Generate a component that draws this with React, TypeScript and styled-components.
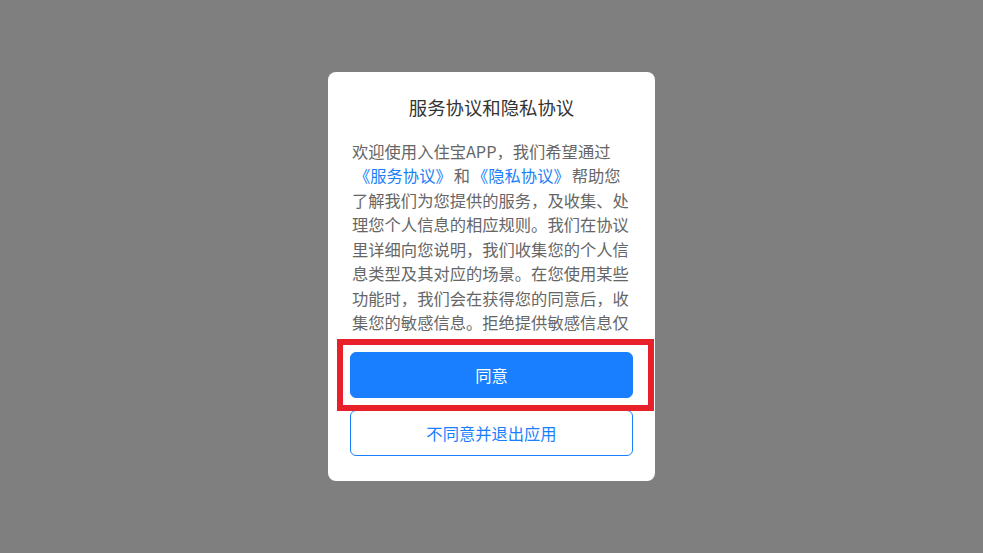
import styled, { createGlobalStyle } from 'styled-components';

const GlobalStyle = createGlobalStyle`
  html, body {
    margin: 0;
    padding: 0;
  }
  body {
    font-family: "Noto Sans CJK SC", "Noto Sans", sans-serif;
  }
`;

function App() {
  return (
    <>
      <GlobalStyle />
      <Mask>
        <Dialog>
          <Title>服务协议和隐私协议</Title>
          <Content>
            欢迎使用入住宝APP，我们希望通过
            <Link>《服务协议》</Link>和<Link>《隐私协议》</Link>
            帮助您了解我们为您提供的服务，及收集、处理您个人信息的相应规则。我们在协议里详细向您说明，我们收集您的个人信息类型及其对应的场景。在您使用某些功能时，我们会在获得您的同意后，收集您的敏感信息。拒绝提供敏感信息仅会使您无法使用相关特定功能，但不影响您使用入住宝的其他功能。
          </Content>
          <Actions>
            <Highlighted>
              <Button primary>同意</Button>
              <Marker />
            </Highlighted>
            <Button>不同意并退出应用</Button>
          </Actions>
        </Dialog>
      </Mask>
    </>
  );
}

export default App;

const Mask = styled.div`
  width: 100%;
  height: 553px;
  background: #7f7f7f;
  display: flex;
  align-items: center;
  justify-content: center;
`;

const Dialog = styled.div`
  width: 327px;
  box-sizing: border-box;
  padding: 22px 22px 25px;
  background: #fff;
  border-radius: 8px;
  display: flex;
  flex-direction: column;
`;

const Title = styled.div`
  height: 26px;
  line-height: 26px;
  font-size: 18.4px;
  color: #333;
  text-align: center;
`;

const Content = styled.div`
  margin: 19px 2px 0;
  height: 196px;
  overflow: hidden;
  font-size: 16.3px;
  line-height: 24.45px;
  color: #666;
  line-break: auto;
  word-break: normal;
`;

const Link = styled.span`
  color: #1a7ff7;
  margin: 0 2px;
`;

const Actions = styled.div`
  margin-top: 17px;
  display: flex;
  flex-direction: column;
  gap: 12px;
`;

const Highlighted = styled.div`
  position: relative;
`;

const Marker = styled.div`
  position: absolute;
  top: -13px;
  bottom: -13px;
  left: -13px;
  right: -21px;
  border: 6px solid #e8202a;
  pointer-events: none;
`;

const Button = styled.button<{ primary?: boolean }>`
  display: block;
  width: 100%;
  height: 46px;
  box-sizing: border-box;
  border-radius: 6px;
  border: 1px solid #1a7ffe;
  background: ${(p) => (p.primary ? '#1a7ffe' : '#fff')};
  color: ${(p) => (p.primary ? '#fff' : '#1a7ffe')};
  font-family: "Noto Sans CJK SC", sans-serif;
  font-size: 16.3px;
  cursor: pointer;
`;
